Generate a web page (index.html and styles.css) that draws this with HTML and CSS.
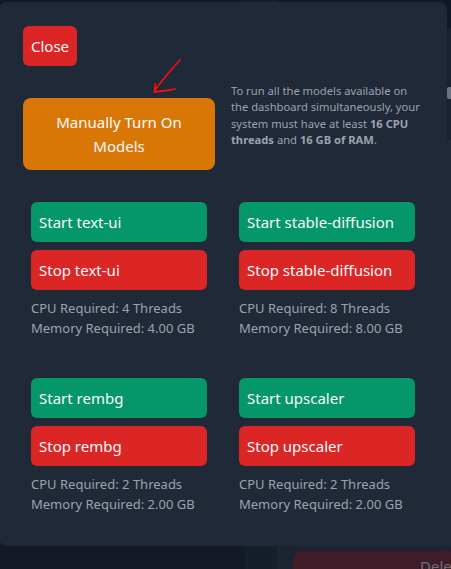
FILE: index.html
```html
<!DOCTYPE html>
<html lang="en">
<head>
<meta charset="utf-8">
<title>Models</title>
<link rel="stylesheet" href="styles.css">
</head>
<body>
<div class="backdrop">
  <div class="bg-col bg-col-a"></div>
  <div class="bg-col bg-col-b"></div>
  <div class="bg-col bg-col-c">
    <div class="bg-top"></div>
    <div class="bg-card"><span class="bg-glyph"></span></div>
    <div class="bg-fill"></div>
    <div class="bg-danger">Delete</div>
  </div>
</div>

<div class="modal">
  <button class="btn btn-close">Close</button>
  <div class="intro">
    <button class="btn btn-manual">Manually Turn On Models</button>
    <p class="note">To run all the models available on the dashboard simultaneously, your system must have at least <b>16 CPU threads</b> and <b>16 GB of RAM</b>.</p>
  </div>
  <div class="models">
    <div class="model">
      <button class="btn btn-start">Start text-ui</button>
      <button class="btn btn-stop">Stop text-ui</button>
      <div class="req">
        <div>CPU Required: 4 Threads</div>
        <div>Memory Required: 4.00 GB</div>
      </div>
    </div>
    <div class="model">
      <button class="btn btn-start">Start stable-diffusion</button>
      <button class="btn btn-stop">Stop stable-diffusion</button>
      <div class="req">
        <div>CPU Required: 8 Threads</div>
        <div>Memory Required: 8.00 GB</div>
      </div>
    </div>
    <div class="model">
      <button class="btn btn-start">Start rembg</button>
      <button class="btn btn-stop">Stop rembg</button>
      <div class="req">
        <div>CPU Required: 2 Threads</div>
        <div>Memory Required: 2.00 GB</div>
      </div>
    </div>
    <div class="model">
      <button class="btn btn-start">Start upscaler</button>
      <button class="btn btn-stop">Stop upscaler</button>
      <div class="req">
        <div>CPU Required: 2 Threads</div>
        <div>Memory Required: 2.00 GB</div>
      </div>
    </div>
  </div>
  <svg class="annot-arrow" width="40" height="42" viewBox="0 0 40 42" aria-hidden="true">
    <path d="M31 5 Q19 18 6 35 M6.5 29 Q6 33 5.5 37 Q14 36 21 35 Q24 34.5 26 34" fill="none" stroke="#ef1010" stroke-width="1.8" stroke-linecap="round" stroke-linejoin="round"/>
  </svg>
</div>
</body>
</html>
```
FILE: styles.css
```css
* { box-sizing: border-box; }

html, body {
  margin: 0;
  padding: 0;
  height: 100%;
}

body {
  background: #111827;
  font-family: "Noto Sans", "Open Sans", "Liberation Sans", sans-serif;
  overflow: hidden;
}

/* page behind the modal */
.backdrop {
  display: flex;
  height: 569px;
}
.bg-col-a { flex: none; width: 245px; background: #131a26; }
.bg-col-b { flex: none; width: 32px; background: #171e2b; }
.bg-col-c {
  flex: 1;
  min-width: 0;
  display: flex;
  flex-direction: column;
  background: #1c2432;
  padding-left: 16px;
}
.bg-top { height: 28px; background: #111827; margin-left: -16px; }
.bg-card {
  height: 112px;
  background: #1a2130;
  display: flex;
  align-items: center;
  justify-content: flex-end;
}
.bg-glyph {
  width: 4px;
  height: 12px;
  margin-top: 18px;
  background: #6b7280;
  border-radius: 2px 0 0 2px;
}
.bg-fill { flex: 1; background: #1f2937; margin-left: -16px; }
.bg-danger {
  height: 18px;
  margin-top: 5px;
  background: #3f1d28;
  border-radius: 8px 0 0 0;
  color: #6b7280;
  font-size: 15px;
  line-height: 30px;
  padding-left: 127px;
  white-space: nowrap;
  overflow: hidden;
}

/* modal */
.modal {
  position: absolute;
  left: -1px;
  top: 2px;
  width: 448px;
  height: 544px;
  background: #1f2937;
  border-radius: 8px;
  padding: 24px;
}

.btn {
  display: block;
  border: 0;
  margin: 0;
  font-family: inherit;
  font-size: 15px;
  line-height: 24px;
  color: #f9fafb;
  text-align: left;
  cursor: pointer;
}

.btn-close {
  background: #dc2626;
  border-radius: 6px;
  padding: 8px 8px;
}

.intro {
  display: flex;
  align-items: flex-start;
  margin-top: 32px;
}

.btn-manual {
  flex: none;
  width: 192px;
  height: 72px;
  background: #d97706;
  border-radius: 8px;
  padding: 12px 16px;
  text-align: center;
}

.note {
  flex: 1;
  margin: -15px 0 0 16px;
  font-size: 11.2px;
  line-height: 16.33px;
  color: #9ca3af;
}
.note b { font-weight: 700; }

.models {
  display: grid;
  grid-template-columns: 1fr 1fr;
  column-gap: 32px;
  row-gap: 40px;
  margin-top: 32px;
  padding: 0 8px 8px;
}

.model {
  display: flex;
  flex-direction: column;
  gap: 8px;
}

.btn-start,
.btn-stop {
  width: 100%;
  height: 40px;
  padding: 8px;
  border-radius: 6px;
  white-space: nowrap;
}
.btn-start { background: #059669; }
.btn-stop { background: #dc2626; }

.req {
  font-size: 13px;
  line-height: 20px;
  color: #9ca3af;
}

.annot-arrow {
  position: absolute;
  left: 150px;
  top: 53px;
}
```
